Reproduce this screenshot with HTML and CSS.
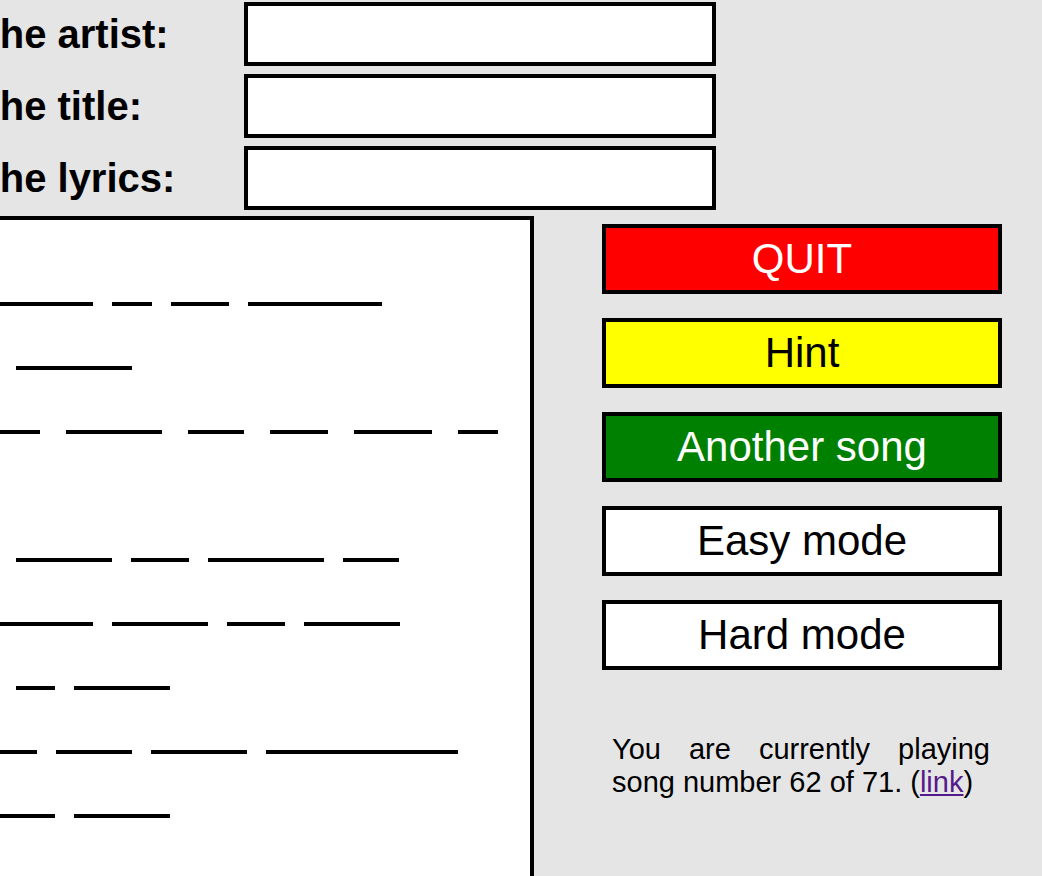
FILE: index.html
```html
<!DOCTYPE html>
<html lang="en">
<head>
<meta charset="utf-8">
<title>Guess the song</title>
<link rel="stylesheet" href="styles.css">
</head>
<body>
<div class="page">
  <form class="guess-form">
    <label class="field-label" for="artist">Guess the artist:</label>
    <input class="field-input" id="artist" type="text">
    <label class="field-label" for="title">Guess the title:</label>
    <input class="field-input" id="title" type="text">
    <label class="field-label" for="lyrics">Guess the lyrics:</label>
    <input class="field-input" id="lyrics" type="text">
  </form>
  <div class="game">
    <div class="lyrics-box">
      <div class="line"><span class="blank" style="width:193px"></span><span class="blank" style="width:40px"></span><span class="blank" style="width:58px"></span><span class="blank" style="width:134px"></span></div>
      <div class="line"><span class="blank" style="width:97px"></span><span class="blank" style="width:116px"></span></div>
      <div class="line wide"><span class="blank" style="width:140px"></span><span class="blank" style="width:96px"></span><span class="blank" style="width:56px"></span><span class="blank" style="width:58px"></span><span class="blank" style="width:78px"></span><span class="blank" style="width:40px"></span></div>
      <div class="line"></div>
      <div class="line"><span class="blank" style="width:97px"></span><span class="blank" style="width:96px"></span><span class="blank" style="width:58px"></span><span class="blank" style="width:116px"></span><span class="blank" style="width:56px"></span></div>
      <div class="line"><span class="blank" style="width:193px"></span><span class="blank" style="width:96px"></span><span class="blank" style="width:58px"></span><span class="blank" style="width:96px"></span></div>
      <div class="line"><span class="blank" style="width:97px"></span><span class="blank" style="width:39px"></span><span class="blank" style="width:96px"></span></div>
      <div class="line"><span class="blank" style="width:137px"></span><span class="blank" style="width:76px"></span><span class="blank" style="width:96px"></span><span class="blank" style="width:192px"></span></div>
      <div class="line"><span class="blank" style="width:155px"></span><span class="blank" style="width:96px"></span></div>
    </div>
    <div class="controls">
      <button class="btn btn-quit" type="button">QUIT</button>
      <button class="btn btn-hint" type="button">Hint</button>
      <button class="btn btn-next" type="button">Another song</button>
      <button class="btn btn-mode" type="button">Easy mode</button>
      <button class="btn btn-mode" type="button">Hard mode</button>
      <p class="status">You are currently playing song number 62 of 71. (<a class="status-link" href="#">link</a>)</p>
    </div>
  </div>
</div>
</body>
</html>
```
FILE: styles.css
```css
html, body {
  margin: 0;
  padding: 0;
}

body {
  background: #e5e5e5;
  color: #000;
  font-family: "Liberation Sans", Helvetica, Arial, sans-serif;
  height: 100vh;
  overflow: hidden;
}

.page {
  margin-left: -147px;
  padding-top: 2px;
}

.guess-form {
  display: grid;
  grid-template-columns: 391px 472px;
  row-gap: 8px;
  align-items: center;
}

.field-label {
  font-size: 40px;
  font-weight: bold;
  white-space: nowrap;
}

.field-input {
  box-sizing: border-box;
  width: 472px;
  height: 64px;
  margin: 0;
  border: 4px solid #000;
  border-radius: 0;
  background: #fff;
  font: inherit;
  font-size: 28px;
  padding: 0 8px;
}

.game {
  display: flex;
  align-items: flex-start;
  margin-top: 6px;
}

.lyrics-box {
  box-sizing: border-box;
  width: 681px;
  background: #fff;
  border: 4px solid #000;
  padding: 22px 0 80px 43px;
}

.line {
  height: 64px;
  display: flex;
  align-items: flex-end;
  gap: 19px;
}

.line.wide {
  gap: 26px;
}

.blank {
  display: block;
  height: 4px;
  background: #000;
  flex: none;
}

.controls {
  width: 400px;
  margin-left: 68px;
  padding-top: 8px;
  display: flex;
  flex-direction: column;
  gap: 24px;
}

.btn {
  box-sizing: border-box;
  width: 400px;
  height: 70px;
  margin: 0;
  padding: 0;
  border: 4px solid #000;
  border-radius: 0;
  font-family: inherit;
  font-size: 42px;
  line-height: 62px;
  text-align: center;
  cursor: pointer;
}

.btn-quit {
  background: #ff0000;
  color: #fff;
}

.btn-hint {
  background: #ffff00;
  color: #000;
}

.btn-next {
  background: #008000;
  color: #fff;
}

.btn-mode {
  background: #fff;
  color: #000;
}

.status {
  margin: 39px 12px 0 10px;
  font-size: 29px;
  text-align: justify;
}

.status-link {
  color: #551a8b;
}
```
